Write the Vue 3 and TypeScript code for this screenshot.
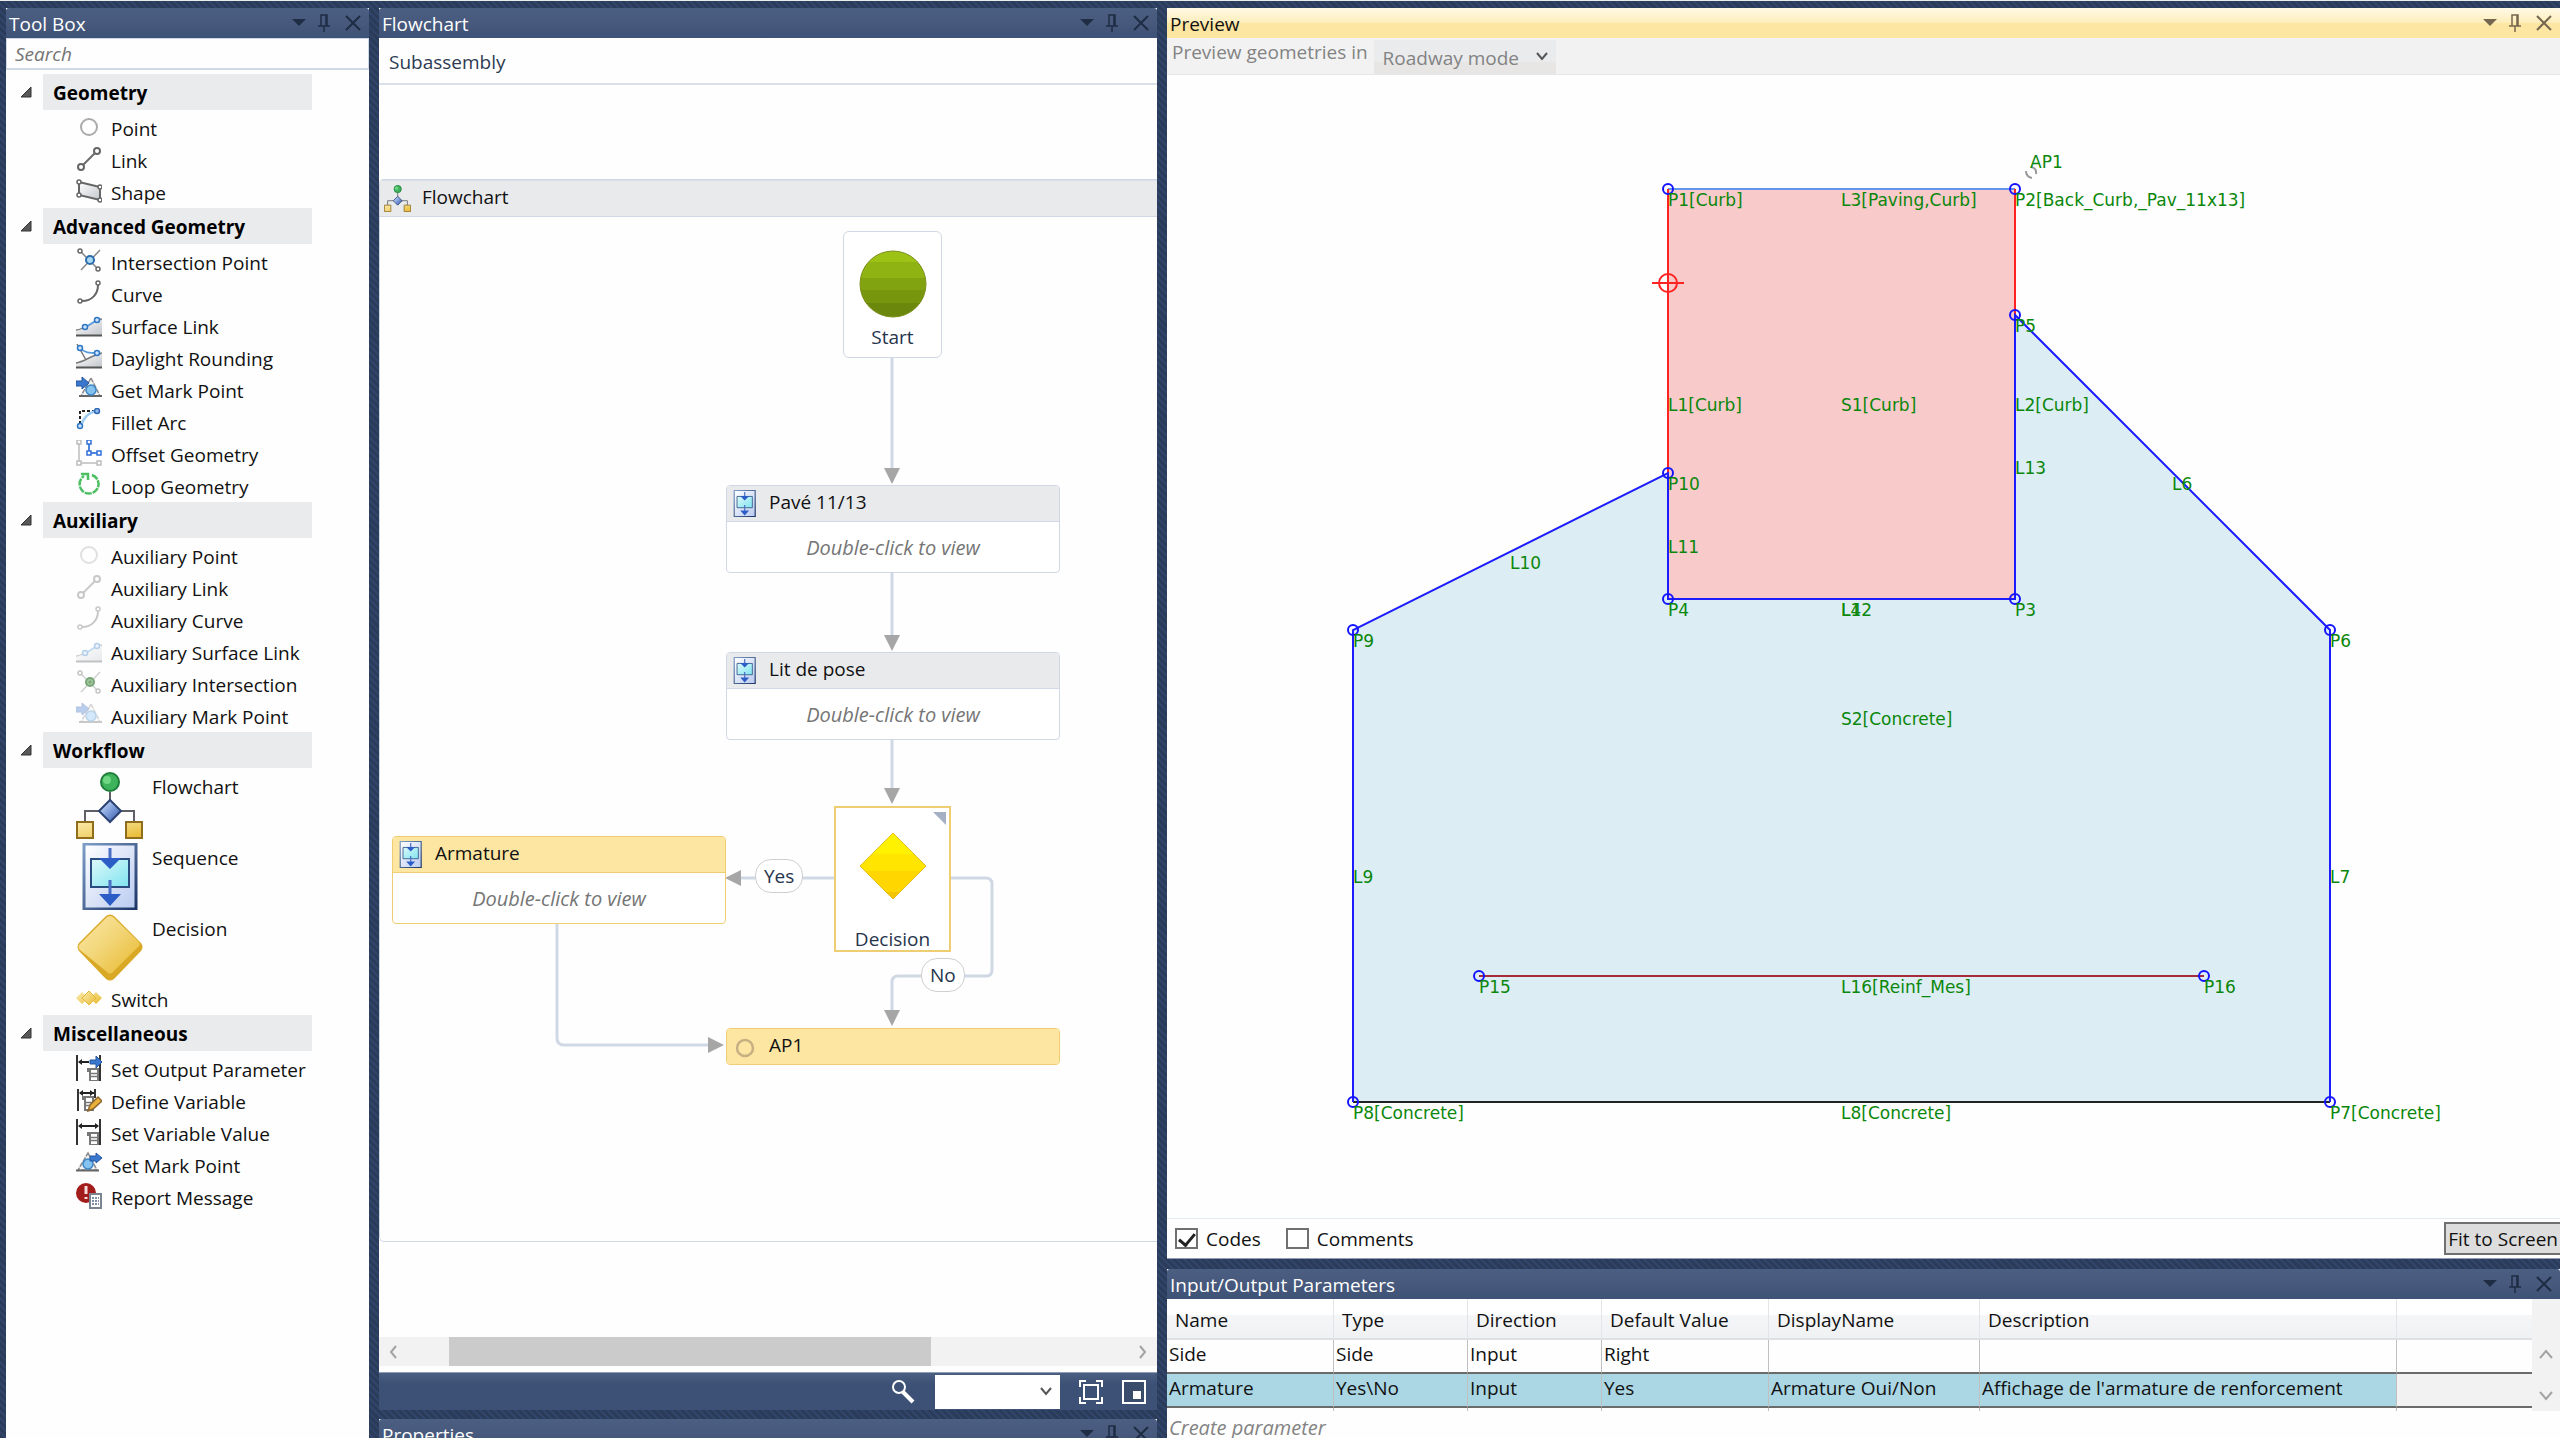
<script setup lang="ts">
import { ref } from 'vue'

interface Tool {
  label: string
  icon: string
  large?: boolean
  faded?: boolean
}
interface Group {
  title: string
  tools: Tool[]
}
interface Mark {
  x: number
  y: number
  text: string
}

const groups: Group[] = [
  {
    title: 'Geometry',
    tools: [
      { label: 'Point', icon: 'point' },
      { label: 'Link', icon: 'link' },
      { label: 'Shape', icon: 'shape' },
    ],
  },
  {
    title: 'Advanced Geometry',
    tools: [
      { label: 'Intersection Point', icon: 'intersection' },
      { label: 'Curve', icon: 'curve' },
      { label: 'Surface Link', icon: 'surface' },
      { label: 'Daylight Rounding', icon: 'daylight' },
      { label: 'Get Mark Point', icon: 'getmark' },
      { label: 'Fillet Arc', icon: 'fillet' },
      { label: 'Offset Geometry', icon: 'offset' },
      { label: 'Loop Geometry', icon: 'loop' },
    ],
  },
  {
    title: 'Auxiliary',
    tools: [
      { label: 'Auxiliary Point', icon: 'point', faded: true },
      { label: 'Auxiliary Link', icon: 'link', faded: true },
      { label: 'Auxiliary Curve', icon: 'curve', faded: true },
      { label: 'Auxiliary Surface Link', icon: 'surface', faded: true },
      { label: 'Auxiliary Intersection', icon: 'auxintersection' },
      { label: 'Auxiliary Mark Point', icon: 'getmark', faded: true },
    ],
  },
  {
    title: 'Workflow',
    tools: [
      { label: 'Flowchart', icon: 'flowchart', large: true },
      { label: 'Sequence', icon: 'sequence', large: true },
      { label: 'Decision', icon: 'decision', large: true },
      { label: 'Switch', icon: 'switch' },
    ],
  },
  {
    title: 'Miscellaneous',
    tools: [
      { label: 'Set Output Parameter', icon: 'output' },
      { label: 'Define Variable', icon: 'define' },
      { label: 'Set Variable Value', icon: 'setvar' },
      { label: 'Set Mark Point', icon: 'setmark' },
      { label: 'Report Message', icon: 'report' },
    ],
  },
]

const points: Mark[] = [
  { x: 1668, y: 189, text: 'P1[Curb]' },
  { x: 2015, y: 189, text: 'P2[Back_Curb,_Pav_11x13]' },
  { x: 2015, y: 599, text: 'P3' },
  { x: 1668, y: 599, text: 'P4' },
  { x: 2015, y: 315, text: 'P5' },
  { x: 2330, y: 630, text: 'P6' },
  { x: 2330, y: 1102, text: 'P7[Concrete]' },
  { x: 1353, y: 1102, text: 'P8[Concrete]' },
  { x: 1353, y: 630, text: 'P9' },
  { x: 1668, y: 473, text: 'P10' },
  { x: 1479, y: 976, text: 'P15' },
  { x: 2204, y: 976, text: 'P16' },
]

const marks: Mark[] = [
  { x: 1668, y: 394, text: 'L1[Curb]' },
  { x: 2015, y: 394, text: 'L2[Curb]' },
  { x: 1841, y: 189, text: 'L3[Paving,Curb]' },
  { x: 1841, y: 599, text: 'L4' },
  { x: 2172, y: 473, text: 'L6' },
  { x: 2330, y: 866, text: 'L7' },
  { x: 1841, y: 1102, text: 'L8[Concrete]' },
  { x: 1353, y: 866, text: 'L9' },
  { x: 1510, y: 552, text: 'L10' },
  { x: 1668, y: 536, text: 'L11' },
  { x: 1841, y: 599, text: 'L12' },
  { x: 2015, y: 457, text: 'L13' },
  { x: 1841, y: 976, text: 'L16[Reinf_Mes]' },
  { x: 1841, y: 394, text: 'S1[Curb]' },
  { x: 1841, y: 708, text: 'S2[Concrete]' },
]

const columns = ['Name', 'Type', 'Direction', 'Default Value', 'DisplayName', 'Description']
const rows = [
  ['Side', 'Side', 'Input', 'Right', '', ''],
  ['Armature', 'Yes\\No', 'Input', 'Yes', 'Armature Oui/Non', "Affichage de l'armature de renforcement"],
]
const selectedRow = ref(1)
const showCodes = ref(true)
const showComments = ref(false)
const search = ref('')
</script>

<template>
  <div class="app">
    <svg class="defs" width="0" height="0" aria-hidden="true">
      <defs>
        <linearGradient id="g-gold" x1="0" y1="0" x2="1" y2="1">
          <stop offset="0" stop-color="#fbe9a8" /><stop offset=".45" stop-color="#f2d67a" /><stop offset="1" stop-color="#e9b92c" />
        </linearGradient>
        <linearGradient id="g-blue" x1="0" y1="0" x2="1" y2="1">
          <stop offset="0" stop-color="#dbe7fa" /><stop offset=".5" stop-color="#7f9fdc" /><stop offset="1" stop-color="#2f4f9c" />
        </linearGradient>
        <linearGradient id="g-sheet" x1="0" y1="0" x2="1" y2="1">
          <stop offset="0" stop-color="#ffffff" /><stop offset="1" stop-color="#b9caf0" />
        </linearGradient>
        <linearGradient id="g-frame" x1="0" y1="0" x2="1" y2="1">
          <stop offset="0" stop-color="#7d9dc8" /><stop offset="1" stop-color="#1d3566" />
        </linearGradient>
        <linearGradient id="g-cyan" x1="0" y1="0" x2="1" y2="1">
          <stop offset="0" stop-color="#def8f9" /><stop offset="1" stop-color="#7fe4f0" />
        </linearGradient>
        <linearGradient id="g-grey" x1="0" y1="0" x2="1" y2="1">
          <stop offset="0" stop-color="#ffffff" /><stop offset="1" stop-color="#c3c7cc" />
        </linearGradient>
      </defs>
      <symbol id="i-point" viewBox="0 0 26 26">
        <circle cx="13" cy="13" r="8" fill="#fff" stroke="#ababab" stroke-width="2" />
      </symbol>
      <symbol id="i-link" viewBox="0 0 26 26">
        <path d="M7 19 19 7" stroke="#6b6b6b" stroke-width="2" />
        <circle cx="5" cy="21" r="3" fill="#fff" stroke="#666" stroke-width="2" />
        <circle cx="21" cy="5" r="3" fill="#fff" stroke="#666" stroke-width="2" />
      </symbol>
      <symbol id="i-shape" viewBox="0 0 26 26">
        <path d="M3 4 24 9V22L3 17Z" fill="url(#g-grey)" stroke="#666" stroke-width="2" />
        <g fill="#fff" stroke="#666" stroke-width="1.5">
          <circle cx="3" cy="4" r="2" /><circle cx="24" cy="9" r="2" /><circle cx="24" cy="22" r="2" /><circle cx="3" cy="17" r="2" />
        </g>
      </symbol>
      <symbol id="i-intersection" viewBox="0 0 26 26">
        <path d="M4 3 22 21M24 2 5 22" stroke="#888" stroke-width="1.5" />
        <circle cx="4" cy="3" r="2" fill="#fff" stroke="#666" stroke-width="1.5" />
        <circle cx="22" cy="21" r="2" fill="#fff" stroke="#666" stroke-width="1.5" />
        <circle cx="14" cy="12" r="4" fill="#a9d7f4" stroke="#2c6cab" stroke-width="2" />
      </symbol>
      <symbol id="i-auxintersection" viewBox="0 0 26 26">
        <path d="M4 3 22 21M24 2 5 22" stroke="#d0d0d0" stroke-width="1.5" />
        <circle cx="4" cy="3" r="2" fill="#fff" stroke="#c4c4c4" stroke-width="1.5" />
        <circle cx="22" cy="21" r="2" fill="#fff" stroke="#c4c4c4" stroke-width="1.5" />
        <circle cx="14" cy="12" r="4" fill="#a3c7a0" stroke="#79a677" stroke-width="2" />
        <circle cx="14" cy="12" r="1.5" fill="#79a677" />
      </symbol>
      <symbol id="i-curve" viewBox="0 0 26 26">
        <path d="M6 21C16 21 22 14 22 5" fill="none" stroke="#666" stroke-width="2" />
        <circle cx="4" cy="21" r="2" fill="#fff" stroke="#666" stroke-width="1.5" />
        <circle cx="22" cy="3" r="2" fill="#fff" stroke="#666" stroke-width="1.5" />
      </symbol>
      <symbol id="i-surface" viewBox="0 0 26 26">
        <path d="M0 18C8 17 16 8 26 7V23H0Z" fill="url(#g-grey)" />
        <path d="M0 23.500H26" stroke="#555" stroke-width="2" />
        <path d="M0 18C4 18 7 16 10 14M21 8 26 7" fill="none" stroke="#777" stroke-width="1.500" />
        <path d="M10 15 21 8" stroke="#5a9bdc" stroke-width="2" />
        <circle cx="9" cy="15" r="2.500" fill="#cfe5fa" stroke="#2f77c4" stroke-width="1.500" />
        <circle cx="21" cy="8" r="2.500" fill="#cfe5fa" stroke="#2f77c4" stroke-width="1.500" />
      </symbol>
      <symbol id="i-daylight" viewBox="0 0 26 26">
        <path d="M0 19C8 18 16 10 26 9V23H0Z" fill="url(#g-grey)" />
        <path d="M0 23.500H26" stroke="#555" stroke-width="2" />
        <path d="M0 19C8 18 14 12 26 9M1 0 10 16" fill="none" stroke="#777" stroke-width="1.500" />
        <path d="M4 4C8 9 14 9 21 9" fill="none" stroke="#5a9bdc" stroke-width="2" />
        <circle cx="4" cy="4" r="2.500" fill="#cfe5fa" stroke="#2f77c4" stroke-width="1.500" />
        <circle cx="21" cy="9" r="2.500" fill="#cfe5fa" stroke="#2f77c4" stroke-width="1.500" />
      </symbol>
      <symbol id="i-getmark" viewBox="0 0 26 26">
        <path d="M15 2 24 20H5Z" fill="#f2f3f4" stroke="#8b8b8b" stroke-width="1.500" stroke-dasharray="5 1" />
        <path d="M3 20H26" stroke="#666" stroke-width="2" />
        <circle cx="15" cy="14" r="5" fill="#84c2ef" stroke="#3c86c6" stroke-width="1.500" />
        <path d="M0 5H6V1L13 7 6 13V10H0Z" fill="#3a78cf" stroke="#24569f" stroke-width="1" />
      </symbol>
      <symbol id="i-setmark" viewBox="0 0 26 26">
        <path d="M12 2 21 19H2Z" fill="#f2f3f4" stroke="#8b8b8b" stroke-width="1.500" stroke-dasharray="5 1" />
        <path d="M0 19.500H23" stroke="#666" stroke-width="2" />
        <circle cx="12" cy="13" r="5" fill="#84c2ef" stroke="#3c86c6" stroke-width="1.500" />
        <path d="M14 5H20V2L26 7 20 12V10H14Z" fill="#3a78cf" stroke="#24569f" stroke-width="1" />
      </symbol>
      <symbol id="i-fillet" viewBox="0 0 26 26">
        <path d="M4 16V3H18" fill="none" stroke="#222" stroke-width="2" stroke-dasharray="3 2" />
        <path d="M5 18C7 10 13 4 21 3" fill="none" stroke="#9ccbf2" stroke-width="2.500" />
        <circle cx="4" cy="18" r="2.500" fill="#cfe5fa" stroke="#2f77c4" stroke-width="1.500" />
        <circle cx="21" cy="3" r="2.500" fill="#8fbcec" stroke="#2f67b4" stroke-width="1.500" />
      </symbol>
      <symbol id="i-offset" viewBox="0 0 26 26">
        <path d="M3 3V23H24" fill="none" stroke="#bdbdbd" stroke-width="1.500" />
        <g fill="#fff" stroke="#bdbdbd" stroke-width="1.500">
          <path d="M1 0H5V4H1ZM1 21H5V25H1ZM21 21H25V25H21Z" />
        </g>
        <path d="M13 3V13H24" fill="none" stroke="#4a86e0" stroke-width="2" />
        <path d="M11 0H15V4H11ZM11 11H15V15H11ZM21 11H25V15H21Z" fill="#fff" stroke="#3470d8" stroke-width="1.500" />
      </symbol>
      <symbol id="i-loop" viewBox="0 0 26 26">
        <path d="M16 3A9.500 9.500 0 1 1 8 4" fill="none" stroke="#4cbf63" stroke-width="2.500" stroke-dasharray="7 1" />
        <path d="M5 2H12V8" fill="none" stroke="#4cbf63" stroke-width="2.500" />
      </symbol>
      <symbol id="i-flowchart" viewBox="0 0 67 67">
        <path d="M34 20V30M9 50V39H58V50" fill="none" stroke="#5d6066" stroke-width="2" />
        <circle cx="34" cy="10" r="9" fill="#3fb35b" stroke="#1d7f3a" stroke-width="2" />
        <circle cx="31" cy="8" r="4" fill="#6fd683" />
        <path d="M34 28 45 39 34 50 23 39Z" fill="url(#g-blue)" stroke="#2b4373" stroke-width="2" />
        <path d="M1 50H17V66H1ZM50 50H66V66H50Z" fill="url(#g-gold)" stroke="#8f6d1c" stroke-width="2" />
      </symbol>
      <symbol id="i-sequence" viewBox="0 0 67 67">
        <path d="M8 1H60V66H8Z" fill="url(#g-sheet)" stroke="url(#g-frame)" stroke-width="3" />
        <path d="M15 16H53V44H15Z" fill="url(#g-cyan)" stroke="#2a4d80" stroke-width="2" />
        <path d="M34 5V17M34 37V52" stroke="#4a6fc4" stroke-width="3" />
        <path d="M23 15H45L34 26ZM23 51H45L34 63Z" fill="#2c5cc5" />
      </symbol>
      <symbol id="i-decision" viewBox="0 0 67 67">
        <path d="M30 2Q34 -1 38 2L65 29Q68 33 65 37L38 65Q34 68 30 65L3 37Q0 33 3 29Z" fill="#d9a825" />
        <path d="M31 3Q34 1 37 3L63 28Q65 31 62 33L37 58Q34 61 31 58L4 36Q1 33 4 30Z" fill="url(#g-gold)" />
      </symbol>
      <symbol id="i-switch" viewBox="0 0 26 26">
        <path d="M6 7 12 13 6 19 0 13ZM20 7 26 13 20 19 14 13Z" fill="url(#g-gold)" />
        <path d="M13 6 20 13 13 20 6 13Z" fill="url(#g-gold)" stroke="#e2b93b" stroke-width="1" />
      </symbol>
      <symbol id="i-setvar" viewBox="0 0 26 26">
        <path d="M1 0V26M24 0V26" stroke="#333" stroke-width="2" />
        <path d="M3 7H22" stroke="#222" stroke-width="2" />
        <path d="M2 7 6 4V10ZM23 7 19 4V10Z" fill="#222" />
        <path d="M12 14H22V26H14V16H12Z" fill="#fff" stroke="#777" stroke-width="2" />
        <path d="M14 18.500H21M14 21.500H21" stroke="#777" stroke-width="1.500" />
      </symbol>
      <symbol id="i-output" viewBox="0 0 26 26">
        <path d="M1 0V26M24 0V26" stroke="#333" stroke-width="2" />
        <path d="M3 7H13" stroke="#222" stroke-width="2" />
        <path d="M2 7 6 4V10Z" fill="#222" />
        <path d="M12 14H22V26H14V16H12Z" fill="#fff" stroke="#777" stroke-width="2" />
        <path d="M14 18.500H21M14 21.500H21" stroke="#777" stroke-width="1.500" />
        <path d="M14 5H20V1L26 7 20 13V9H14Z" fill="#3a78cf" stroke="#24569f" stroke-width="1" />
      </symbol>
      <symbol id="i-define" viewBox="0 0 26 26">
        <path d="M2 2V24M19 2V11" stroke="#333" stroke-width="2" />
        <path d="M4 6H18" stroke="#222" stroke-width="2" />
        <path d="M3 6 7 3V9ZM18 6 14 3V9Z" fill="#222" />
        <path d="M7 10H17V23H9V12H7Z" fill="#fff" stroke="#777" stroke-width="2" />
        <path d="M9 15.500H16M9 18.500H16" stroke="#777" stroke-width="1.500" />
        <path d="M12 24 14 18 22 10 26 14 17 22Z" fill="#e9b13a" stroke="#8d6630" stroke-width="1.500" />
      </symbol>
      <symbol id="i-report" viewBox="0 0 26 26">
        <circle cx="10" cy="10" r="10" fill="#a31c1c" />
        <path d="M10 3V11" stroke="#f6dcdc" stroke-width="3" />
        <path d="M10 14V16" stroke="#f6dcdc" stroke-width="3" />
        <path d="M14 11H25V25H14Z" fill="#fff" stroke="#7a8391" stroke-width="2" />
        <path d="M16 15H23M16 18H23M16 21H23" stroke="#566a8c" stroke-width="1.500" stroke-dasharray="2 1" />
      </symbol>
      <symbol id="i-menu" viewBox="0 0 14 18"><path d="M0 5H14L7 12Z" fill="currentColor" /></symbol>
      <symbol id="i-pin" viewBox="0 0 12 18">
        <path d="M3 12V1H9V12M0 12H12M6 12V18M8 1V12" fill="none" stroke="currentColor" stroke-width="1.500" />
      </symbol>
      <symbol id="i-close" viewBox="0 0 16 18"><path d="M1 2 15 16M15 2 1 16" stroke="currentColor" stroke-width="2" /></symbol>
      <symbol id="i-chevron" viewBox="0 0 12 10"><path d="M1 2 6 8 11 2" fill="none" stroke="currentColor" stroke-width="2" /></symbol>
    </svg>

    <!-- Tool box -->
    <aside class="panel">
      <header class="title">
        <h1>Tool Box</h1>
        <button aria-label="Window menu"><svg width="14" height="18"><use href="#i-menu" /></svg></button>
        <button aria-label="Pin"><svg width="12" height="18"><use href="#i-pin" /></svg></button>
        <button aria-label="Close"><svg width="16" height="18"><use href="#i-close" /></svg></button>
      </header>
      <input v-model="search" class="search" type="text" placeholder="Search" aria-label="Search tools" />
      <section v-for="g in groups" :key="g.title" class="group">
        <button class="group-head">
          <svg width="12" height="12"><path d="M11 1V11H1Z" fill="#595959" stroke="#333" /></svg>
          <span>{{ g.title }}</span>
        </button>
        <ul>
          <li v-for="t in g.tools" :key="t.label">
            <button class="tool" :class="{ large: t.large }">
              <svg :class="{ faded: t.faded }"><use :href="'#i-' + t.icon" /></svg>
              <span>{{ t.label }}</span>
            </button>
          </li>
        </ul>
      </section>
    </aside>

    <!-- Flowchart designer -->
    <div class="column">
      <section class="panel flow">
        <header class="title">
          <h1>Flowchart</h1>
          <button aria-label="Window menu"><svg width="14" height="18"><use href="#i-menu" /></svg></button>
          <button aria-label="Pin"><svg width="12" height="18"><use href="#i-pin" /></svg></button>
          <button aria-label="Close"><svg width="16" height="18"><use href="#i-close" /></svg></button>
        </header>
        <nav class="crumbs"><a href="#subassembly">Subassembly</a></nav>
        <div class="designer">
          <div class="sheet">
            <h2 class="sheet-head"><svg width="27" height="27"><use href="#i-flowchart" /></svg><span>Flowchart</span></h2>
            <div class="canvas">
              <svg class="wires" width="776" height="1020" viewBox="380 217 776 1020">
                <g fill="none" stroke="#d0d7e5" stroke-width="3">
                  <path d="M892 357V470M892 573V637M892 740V790M834 878H740" />
                  <path d="M951 878H986Q992 878 992 884V970Q992 976 986 976H898Q892 976 892 982V1012" />
                  <path d="M557 923V1038Q557 1045 564 1045H710" />
                </g>
                <path
                  d="M884 468H900L892 484ZM884 635H900L892 651ZM884 788H900L892 804ZM884 1010H900L892 1026ZM741 870V886L725 878ZM708 1037V1053L724 1045Z"
                  fill="#a6a6a6"
                />
              </svg>
              <div class="node start">
                <svg width="68" height="68" viewBox="0 0 68 68">
                  <clipPath id="ball"><circle cx="34" cy="34" r="33" /></clipPath>
                  <g clip-path="url(#ball)">
                    <path d="M0 0H68V12H0Z" fill="#9bc215" /><path d="M0 12H68V28H0Z" fill="#8fb312" />
                    <path d="M0 28H68V40H0Z" fill="#81a30f" /><path d="M0 40H68V53H0Z" fill="#77960e" />
                    <path d="M0 53H68V68H0Z" fill="#6b880d" />
                  </g>
                  <circle cx="34" cy="34" r="33" fill="none" stroke="#7d8f1a" />
                </svg>
                <span>Start</span>
              </div>
              <div class="node activity pave">
                <h3><svg width="27" height="27"><use href="#i-sequence" /></svg><span>Pavé 11/13</span></h3>
                <p>Double-click to view</p>
              </div>
              <div class="node activity lit">
                <h3><svg width="27" height="27"><use href="#i-sequence" /></svg><span>Lit de pose</span></h3>
                <p>Double-click to view</p>
              </div>
              <div class="node activity chosen armature">
                <h3><svg width="27" height="27"><use href="#i-sequence" /></svg><span>Armature</span></h3>
                <p>Double-click to view</p>
              </div>
              <div class="node decision">
                <svg class="corner" width="13" height="13"><path d="M0 0H13V13Z" fill="#a5b0c4" /></svg>
                <svg width="68" height="68" viewBox="0 0 68 68">
                  <clipPath id="gem"><path d="M34 1 67 34 34 67 1 34Z" /></clipPath>
                  <g clip-path="url(#gem)">
                    <path d="M0 0H68V22H0Z" fill="#fff200" /><path d="M0 22H68V39H0Z" fill="#ffe500" />
                    <path d="M0 39H68V60H0Z" fill="#ffd600" /><path d="M0 60H68V68H0Z" fill="#f2c500" />
                  </g>
                  <path d="M34 1 67 34 34 67 1 34Z" fill="none" stroke="#e8bd1c" />
                </svg>
                <span>Decision</span>
              </div>
              <div class="node activity chosen ap">
                <h3><svg width="27" height="27"><circle cx="14" cy="15" r="8" fill="none" stroke="#c6b083" stroke-width="2.500" /></svg><span>AP1</span></h3>
              </div>
              <span class="node pill yes">Yes</span>
              <span class="node pill no">No</span>
            </div>
          </div>
        </div>
        <div class="hscroll">
          <button aria-label="Scroll left"><svg width="8" height="14"><path d="M7 1 2 7 7 13" /></svg></button>
          <div class="track"><div class="thumb"></div></div>
          <button aria-label="Scroll right"><svg width="8" height="14"><path d="M1 1 6 7 1 13" /></svg></button>
        </div>
        <footer class="status">
          <svg width="26" height="26"><circle cx="9" cy="8" r="6" fill="none" stroke="#fff" stroke-width="2" /><path d="M13 13 23 23" stroke="#fff" stroke-width="4" /></svg>
          <span class="combo zoom">
            <select aria-label="Zoom"><option></option></select>
            <svg width="12" height="10"><use href="#i-chevron" /></svg>
          </span>
          <button aria-label="Fit to view">
            <svg width="24" height="24"><path d="M1 7V1H7M17 1H23V7M23 17V23H17M7 23H1V17M5 5H19V19H5Z" fill="none" stroke="#fff" stroke-width="2" /></svg>
          </button>
          <button aria-label="Overview">
            <svg width="24" height="24"><path d="M1 1H23V23H1Z" fill="#3a4c6b" stroke="#fff" stroke-width="2" /><path d="M11 11H19V19H11Z" fill="#fff" /></svg>
          </button>
        </footer>
      </section>
      <section class="panel properties">
        <header class="title">
          <h1>Properties</h1>
          <button aria-label="Window menu"><svg width="14" height="18"><use href="#i-menu" /></svg></button>
          <button aria-label="Pin"><svg width="12" height="18"><use href="#i-pin" /></svg></button>
          <button aria-label="Close"><svg width="16" height="18"><use href="#i-close" /></svg></button>
        </header>
      </section>
    </div>

    <!-- Preview and parameters -->
    <div class="column">
      <section class="panel preview">
        <header class="title active">
          <h1>Preview</h1>
          <button aria-label="Window menu"><svg width="14" height="18"><use href="#i-menu" /></svg></button>
          <button aria-label="Pin"><svg width="12" height="18"><use href="#i-pin" /></svg></button>
          <button aria-label="Close"><svg width="16" height="18"><use href="#i-close" /></svg></button>
        </header>
        <div class="mode">
          <label for="mode">Preview geometries in</label>
          <span class="combo">
            <select id="mode" disabled><option>Roadway mode</option></select>
            <svg width="12" height="10"><use href="#i-chevron" /></svg>
          </span>
        </div>
        <div class="drawing">
          <svg viewBox="1167 75 1393 1143">
            <path d="M1353 630 1668 473V599H2015V315L2330 630V1102H1353Z" fill="#dcedf4" />
            <path d="M1668 189H2015V599H1668Z" fill="#f8caca" />
            <g fill="none" stroke-width="2">
              <path d="M1353 1102H2330" stroke="#222" />
              <path d="M1668 189H2015" stroke="#6495ed" />
              <path d="M1668 189V473M2015 189V315" stroke="#f22" />
              <path d="M1479 976H2204" stroke="#a52a3a" />
              <path d="M1353 1102V630L1668 473V599H2015V315L2330 630V1102" stroke="#1c1cff" />
              <circle v-for="p in points" :key="p.text" :cx="p.x" :cy="p.y" r="5" stroke="#1414ff" />
              <circle cx="1668" cy="283" r="9" stroke="#f22" />
              <path d="M1652 283H1684M1668 267V299" stroke="#f22" />
              <path d="M2026 171Q2026 177 2032 178M2031 167Q2037 168 2036 174" stroke="#999" />
            </g>
            <g fill="#0b870b">
              <text v-for="m in [...points, ...marks]" :key="m.text" :x="m.x" :y="m.y + 17">{{ m.text }}</text>
              <text x="2030" y="168">AP1</text>
            </g>
          </svg>
        </div>
        <footer class="options">
          <label><input v-model="showCodes" type="checkbox" />Codes</label>
          <label><input v-model="showComments" type="checkbox" />Comments</label>
          <button>Fit to Screen</button>
        </footer>
      </section>
      <section class="panel params">
        <header class="title">
          <h1>Input/Output Parameters</h1>
          <button aria-label="Window menu"><svg width="14" height="18"><use href="#i-menu" /></svg></button>
          <button aria-label="Pin"><svg width="12" height="18"><use href="#i-pin" /></svg></button>
          <button aria-label="Close"><svg width="16" height="18"><use href="#i-close" /></svg></button>
        </header>
        <div class="grid">
          <table>
            <colgroup><col class="c-l" /><col class="c-s" /><col class="c-s" /><col class="c-l" /><col class="c-xl" /><col class="c-xxl" /><col /></colgroup>
            <thead>
              <tr><th v-for="c in columns" :key="c" scope="col">{{ c }}</th><td></td></tr>
            </thead>
            <tbody>
              <tr v-for="(r, i) in rows" :key="r[0]" :class="{ selected: i === selectedRow }" @click="selectedRow = i">
                <td v-for="(c, j) in r" :key="j">{{ c }}</td>
                <td></td>
              </tr>
              <tr class="rest"><td v-for="n in 7" :key="n"></td></tr>
            </tbody>
          </table>
          <div class="vscroll">
            <button aria-label="Scroll up"><svg width="14" height="10"><path d="M1 9 7 2 13 9" /></svg></button>
            <button aria-label="Scroll down"><svg width="14" height="10"><path d="M1 1 7 8 13 1" /></svg></button>
          </div>
        </div>
        <button class="create">Create parameter</button>
      </section>
    </div>
  </div>
</template>

<style>
body {
  margin: 0;
}
</style>

<style scoped>
* {
  box-sizing: border-box;
}
.app {
  display: grid;
  grid-template-columns: 363px 778fr 1393fr;
  gap: 10px;
  height: 100vh;
  overflow: hidden;
  padding: 7px 0 0 6px;
  border-top: 1px solid #e8ede8;
  background: repeating-linear-gradient(45deg, #2b3b5a 0 3px, #31446a 3px 5px);
  font-family: 'Open Sans', 'Noto Sans', sans-serif;
  font-size: 19px;
  color: #111;
}
.defs {
  position: absolute;
}
h1,
h2,
h3,
p,
ul {
  margin: 0;
  padding: 0;
  font-size: inherit;
  font-weight: 400;
  list-style: none;
}
button,
input,
select {
  margin: 0;
  padding: 0;
  border: 0;
  border-radius: 0;
  background: none;
  color: inherit;
  font: inherit;
}
svg {
  display: block;
  flex: none;
}
.column {
  display: flex;
  flex-direction: column;
  min-width: 0;
  min-height: 0;
}
.panel {
  display: flex;
  flex-direction: column;
  min-width: 0;
  min-height: 0;
  background: #fefefe;
}
.title {
  display: flex;
  flex: none;
  align-items: center;
  gap: 12px;
  height: 30px;
  padding: 0 8px 0 3px;
  border-radius: 3px 3px 0 0;
  background: linear-gradient(#4b5f82, #47597c 50%, #3e5277);
  color: #fff;
}
.title h1 {
  flex: 1;
  padding-top: 3px;
  line-height: 27px;
}
.title button {
  color: #1e2c44;
}
.title button:last-child {
  margin-left: 3px;
}
.title.active {
  background: linear-gradient(#fff9e6, #feeebb 48%, #fde6a1 52%);
  color: #111;
}
.title.active button {
  color: #75664f;
}
.search {
  height: 32px;
  margin-bottom: 4px;
  padding: 0 8px;
  border: 1px solid #d0d7e5;
  border-bottom: 2px solid #d0d7e5;
  font-style: italic;
}
.search::placeholder {
  color: #757575;
  opacity: 1;
}
.group {
  padding-bottom: 2px;
}
.group-head {
  display: flex;
  align-items: center;
  gap: 11px;
  width: 100%;
  padding-left: 14px;
  font-weight: 700;
  text-align: left;
}
.group-head span {
  width: 269px;
  padding: 2px 10px 0;
  background: #e9ebed;
  line-height: 34px;
  color: #000;
}
.tool {
  display: flex;
  align-items: center;
  gap: 9px;
  width: 100%;
  height: 32px;
  padding: 2px 0 0 70px;
  text-align: left;
}
.tool span {
  padding-top: 4px;
}
.tool svg {
  width: 26px;
  height: 26px;
}
.tool svg.faded {
  opacity: 0.35;
}
.tool.large {
  align-items: flex-start;
  height: 71px;
  padding-top: 4px;
}
.tool.large span {
  padding-top: 2px;
}
.tool.large svg {
  width: 67px;
  height: 67px;
}

.flow {
  flex: 1;
}
.crumbs {
  flex: none;
  padding: 0 10px;
  border-bottom: 2px solid #d9e0ea;
  line-height: 49px;
  height: 47px;
}
.crumbs a {
  color: #2d3b53;
  text-decoration: none;
}
.designer {
  flex: 1;
  min-height: 0;
  overflow: hidden;
  padding-top: 94px;
}
.sheet {
  border: 1px solid #d0d7e5;
  border-right: 0;
  border-radius: 5px 0 0 5px;
}
.sheet-head {
  display: flex;
  align-items: center;
  gap: 11px;
  height: 37px;
  padding-left: 4px;
  border-top: 1px solid #d9e0ea;
  border-bottom: 1px solid #d0d7e5;
  background: #e9eaec;
}
.sheet-head span,
.activity h3 span {
  padding-bottom: 3px;
}
/* Free canvas: nodes keep their own coordinates. */
.canvas {
  position: relative;
  height: 1024px;
  overflow: hidden;
}
.wires {
  display: block;
}
.node {
  position: absolute;
}
.start,
.decision {
  display: flex;
  flex-direction: column;
  align-items: center;
  background: #fff;
  color: #26344c;
}
.start {
  left: 463px;
  top: 14px;
  width: 99px;
  height: 127px;
  padding-top: 18px;
  border: 1px solid #d0d7e5;
  border-radius: 6px;
}
.start span {
  margin-top: 6px;
}
.decision {
  left: 454px;
  top: 589px;
  width: 117px;
  height: 146px;
  padding-top: 24px;
  border: 2px solid #efce73;
}
.decision span {
  margin-top: 26px;
}
.corner {
  position: absolute;
  right: 3px;
  top: 4px;
}
.activity {
  width: 334px;
  border: 1px solid #d0d7e5;
  border-radius: 4px;
  background: #fff;
  overflow: hidden;
}
.activity h3 {
  display: flex;
  align-items: center;
  gap: 11px;
  height: 35px;
  padding-left: 4px;
  background: #e9eaec;
}
.activity p {
  height: 51px;
  border-top: 1px solid #d0d7e5;
  line-height: 52px;
  font-size: 20px;
  font-style: italic;
  color: #757575;
  text-align: center;
}
.chosen,
.chosen p {
  border-color: #efce73;
}
.chosen h3 {
  background: #fde6a1;
}
.pave {
  left: 346px;
  top: 268px;
}
.lit {
  left: 346px;
  top: 435px;
}
.armature {
  left: 12px;
  top: 619px;
}
.ap {
  left: 346px;
  top: 811px;
}
.pill {
  padding: 0 8px;
  border: 1px solid #cfcfcf;
  border-radius: 16px;
  background: #fff;
  line-height: 32px;
  color: #26344c;
}
.yes {
  left: 375px;
  top: 642px;
}
.no {
  left: 541px;
  top: 741px;
}
.hscroll {
  display: flex;
  flex: none;
  align-items: center;
  height: 29px;
  margin-bottom: 6px;
  padding: 0 10px;
  background: #f2f2f2;
}
.hscroll path,
.vscroll path {
  fill: none;
  stroke: #a3a3a3;
  stroke-width: 2;
}
.track {
  flex: 1;
  height: 100%;
}
.thumb {
  width: 65%;
  height: 100%;
  margin-left: 7%;
  background: #cbcbcb;
}
.status {
  display: flex;
  flex: none;
  align-items: center;
  justify-content: flex-end;
  gap: 19px;
  height: 38px;
  padding: 0 11px;
  border-top: 1px solid #8f9db5;
  background: linear-gradient(#4b5f82, #3d5176 30%);
}
.combo {
  display: inline-flex;
  position: relative;
}
.combo select {
  width: 125px;
  height: 34px;
  appearance: none;
  background: #fff;
}
.combo svg {
  position: absolute;
  right: 8px;
  top: 11px;
  color: #555;
  pointer-events: none;
}
.properties {
  flex: none;
  height: 19px;
  margin-top: 9px;
  overflow: hidden;
}

.preview {
  flex: 1;
}
.mode {
  display: flex;
  flex: none;
  align-items: flex-start;
  gap: 6px;
  height: 37px;
  padding: 2px 5px;
  border-bottom: 1px solid #e6e6e6;
  background: #f2f2f2;
  color: #838383;
}
.mode label {
  line-height: 24px;
}
.mode .combo select {
  width: 182px;
  padding: 2px 9px 0;
  background: linear-gradient(#e9ebed 65%, #e7e6e4 65%);
  color: #838383;
  opacity: 1;
}
.drawing {
  flex: 1;
  min-height: 0;
  border-bottom: 1px solid #e3ebf3;
}
.drawing svg {
  width: 100%;
  height: 100%;
}
.drawing text {
  font-family: 'DejaVu Sans', sans-serif;
  font-size: 17px;
}
.options {
  display: flex;
  flex: none;
  align-items: center;
  gap: 25px;
  height: 40px;
  padding-left: 8px;
  border-bottom: 1px solid #8f9db5;
}
.options label {
  display: flex;
  align-items: center;
  gap: 8px;
}
.options input {
  width: 23px;
  height: 21px;
  border: 2px solid #707070;
  background: #fff;
  appearance: none;
}
.options input:checked::before {
  content: '';
  display: block;
  width: 7px;
  height: 13px;
  margin: 0 auto;
  border: solid #222;
  border-width: 0 3px 3px 0;
  transform: rotate(40deg);
}
.options button {
  height: 33px;
  margin-left: auto;
  padding: 0 2px;
  border: 2px solid #707070;
  border-right: 0;
  background: #ddd;
}
.params {
  flex: none;
  height: 169px;
  margin-top: 10px;
  overflow: hidden;
}
.grid {
  display: flex;
  flex: none;
}
table {
  flex: 1;
  border-collapse: separate;
  border-spacing: 0;
  table-layout: fixed;
}
.c-l {
  width: 167px;
}
.c-s {
  width: 134px;
}
.c-xl {
  width: 211px;
}
.c-xxl {
  width: 417px;
}
th,
td {
  height: 34px;
  padding: 0 2px 4px;
  border-right: 1px solid #c0c0c0;
  border-bottom: 2px solid #6b6b6b;
  line-height: 28px;
  font-weight: 400;
  text-align: left;
  white-space: nowrap;
}
thead th,
thead td {
  height: 41px;
  padding: 3px 8px 0;
  border-right-color: #e3e5e9;
  border-bottom-color: #dfe0e3;
  background: linear-gradient(#fff 40%, #f5f6f8 40%, #f0f1f3);
}
tr > :last-child {
  border-right: 0;
}
.selected td {
  background: #abd6e3;
}
.selected td:last-child {
  background: #f2f2f2;
}
.rest td {
  height: 3px;
  padding: 0;
  border-bottom: 0;
  line-height: 0;
}
.vscroll {
  display: flex;
  flex-direction: column;
  align-items: center;
  gap: 32px;
  width: 28px;
  padding-top: 50px;
  background: #f2f2f2;
}
.create {
  padding: 3px 2px;
  font-size: 20px;
  font-style: italic;
  color: #838383;
  text-align: left;
}
</style>
